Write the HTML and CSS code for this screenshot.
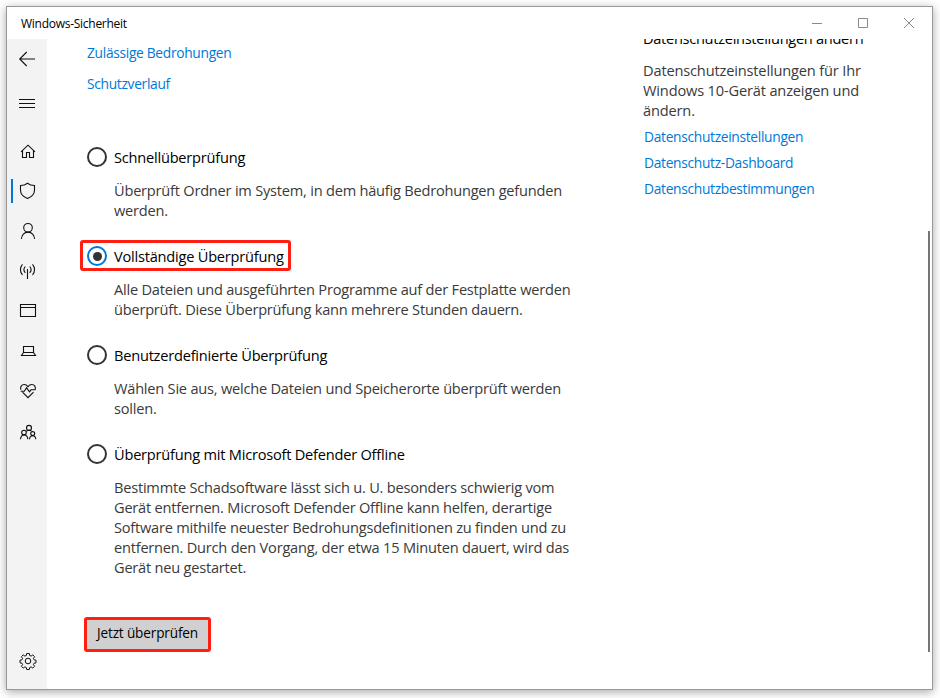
FILE: index.html
```html
<!DOCTYPE html>
<html lang="de">
<head>
    <meta charset="UTF-8">
    <title>Windows-Sicherheit</title>
    <link rel="stylesheet" href="styles.css">
</head>
<body>
<div class="window">
    <div class="titlebar">
        <div class="title">Windows-Sicherheit</div>
        <div class="controls">
            <svg class="control" viewBox="0 0 46 32"><path d="M18 16.5h10"/></svg>
            <svg class="control" viewBox="0 0 46 32"><path d="M18.5 11.5h9v9h-9z"/></svg>
            <svg class="control" viewBox="0 0 46 32"><path d="M18 11l10 10M28 11l-10 10"/></svg>
        </div>
    </div>
    <div class="main">
        <div class="sidebar">
            <svg class="icon icon-back" viewBox="0 0 40 40"><path d="M28 20H12.7M19.7 13l-7 7 7 7"/></svg>
            <svg class="icon icon-menu" viewBox="0 0 40 40"><path d="M12 15.5h16M12 19.5h16M12 23.5h16"/></svg>
            <svg class="icon" viewBox="0 0 40 40"><path d="M14 20.8l7-6.6 7 6.6M15.5 19.5v7h4v-5h3v5h4v-7"/></svg>
            <div class="active">
                <svg class="icon" viewBox="0 0 40 40"><path d="M20.5 12.2c-2 1.6-4.3 2.3-7 2.3v4.5c0 4.5 3 7 7 8.6 4-1.6 7-4.1 7-8.6v-4.5c-2.7 0-5-.7-7-2.3z"/></svg>
            </div>
            <svg class="icon" viewBox="0 0 40 40"><circle cx="21" cy="16.8" r="4.3"/><path d="M14.5 28c0-4 2.8-6.9 6.5-6.9s6.5 2.9 6.5 6.9"/></svg>
            <svg class="icon" viewBox="0 0 40 40"><path d="M20.5 18v10M18.3 15.5c-1.6 1.8-1.6 4.6 0 6.4M22.7 15.5c1.6 1.8 1.6 4.6 0 6.4M15.5 13.4c-2.7 3-2.7 7.6 0 10.6M25.5 13.4c2.7 3 2.7 7.6 0 10.6"/></svg>
            <svg class="icon" viewBox="0 0 40 40"><path d="M13.5 13.5h15v12h-15zM13.5 16.5h15"/></svg>
            <svg class="icon" viewBox="0 0 40 40"><path d="M16.5 22v-6.5h10V22M16.5 21.5h10l2 3h-14z"/></svg>
            <svg class="icon" viewBox="0 0 40 40"><path d="M13.9 18.8c-1-2.7.6-5.3 3.3-5.3 1.7 0 2.9.9 3.8 2.2.9-1.3 2.1-2.2 3.8-2.2 2.7 0 4.3 2.6 3.3 5.3h-4.1l-1.5 2-3-4-2.2 3.5h-3.6M15.5 21.2l5.5 5.5 5.5-5.5"/></svg>
            <svg class="icon" viewBox="0 0 40 40"><circle cx="22" cy="16.9" r="2.5"/><circle cx="17" cy="21.6" r="2.3"/><circle cx="25.7" cy="22.6" r="2"/><path d="M13.5 28.3c.2-2.8 1.5-4.3 3.6-4.3s3.6 1.5 3.8 4.3M19.3 20.5c.7-.8 1.6-1.2 2.7-1.2 1 0 1.9.3 2.5.9M22.5 28.3c.2-2.3 1.4-3.5 3.2-3.5s2.9 1.2 3.1 3.5"/></svg>
            <svg class="icon icon-settings" viewBox="0 0 40 40"><circle cx="21" cy="20" r="2.8"/><path d="M19.7 12.5h2.6l.4 2 1.4.6 1.7-1.2 1.8 1.8-1.2 1.7.6 1.4 2 .4v2.6l-2 .4-.6 1.4 1.2 1.7-1.8 1.8-1.7-1.2-1.4.6-.4 2h-2.6l-.4-2-1.4-.6-1.7 1.2-1.8-1.8 1.2-1.7-.6-1.4-2-.4v-2.6l2-.4.6-1.4-1.2-1.7 1.8-1.8 1.7 1.2 1.4-.6z"/></svg>
        </div>
        <div class="content">
            <div class="scan">
                <a class="link">Zulässige Bedrohungen</a>
                <a class="link">Schutzverlauf</a>
                <div class="options">
                    <div class="option">
                        <div class="option-head"><span class="radio"></span><span class="label">Schnellüberprüfung</span></div>
                        <p class="text">Überprüft Ordner im System, in dem häufig Bedrohungen gefunden<br>werden.</p>
                    </div>
                    <div class="option">
                        <div class="option-head marked"><span class="radio checked"></span><span class="label">Vollständige Überprüfung</span></div>
                        <p class="text">Alle Dateien und ausgeführten Programme auf der Festplatte werden<br>überprüft. Diese Überprüfung kann mehrere Stunden dauern.</p>
                    </div>
                    <div class="option">
                        <div class="option-head"><span class="radio"></span><span class="label">Benutzerdefinierte Überprüfung</span></div>
                        <p class="text">Wählen Sie aus, welche Dateien und Speicherorte überprüft werden<br>sollen.</p>
                    </div>
                    <div class="option">
                        <div class="option-head"><span class="radio"></span><span class="label">Überprüfung mit Microsoft Defender Offline</span></div>
                        <p class="text">Bestimmte Schadsoftware lässt sich u. U. besonders schwierig vom<br>Gerät entfernen. Microsoft Defender Offline kann helfen, derartige<br>Software mithilfe neuester Bedrohungsdefinitionen zu finden und zu<br>entfernen. Durch den Vorgang, der etwa 15 Minuten dauert, wird das<br>Gerät neu gestartet.</p>
                    </div>
                </div>
                <button class="btn">Jetzt überprüfen</button>
            </div>
            <div class="privacy">
                <div class="privacy-title">Datenschutzeinstellungen ändern</div>
                <p class="text">Datenschutzeinstellungen für Ihr<br>Windows 10-Gerät anzeigen und<br>ändern.</p>
                <div class="privacy-links">
                    <a class="link">Datenschutzeinstellungen</a>
                    <a class="link">Datenschutz-Dashboard</a>
                    <a class="link">Datenschutzbestimmungen</a>
                </div>
            </div>
            <div class="scrollbar"></div>
        </div>
    </div>
</div>
</body>
</html>
```
FILE: styles.css
```css
html{
    height: 100%;
}
body{
    height: 100%;
    margin: 0;
    padding: 6px 7px 8px 6px;
    box-sizing: border-box;
    overflow: hidden;
    background-color: #fff;
    font-family: "Open Sans", "Noto Sans", sans-serif;
    font-size: 14.6px;
    letter-spacing: -0.22px;
    line-height: 20px;
    color: #000;
}
.window{
    display: flex;
    flex-direction: column;
    box-sizing: border-box;
    height: 100%;
    border: 1px solid #999;
    background-color: #fff;
    box-shadow: 0 2px 9px rgba(0, 0, 0, 0.35);
}
.titlebar{
    display: flex;
    justify-content: space-between;
    align-items: center;
    height: 32px;
    padding-left: 14px;
}
.title{
    padding-top: 1px;
    font-size: 12px;
    letter-spacing: -0.27px;
}
.controls{
    display: flex;
}
.control{
    width: 46px;
    height: 32px;
    fill: none;
    stroke: #8a8a8a;
}
.main{
    display: flex;
    flex: 1;
    min-height: 0;
}
.sidebar{
    display: flex;
    flex-direction: column;
    width: 40px;
    background-color: #f3f3f3;
}
.icon{
    display: block;
    width: 40px;
    height: 40px;
    fill: none;
    stroke: #111;
    stroke-width: 1.1;
}
.icon-back{
    margin-bottom: 5px;
}
.icon-menu{
    margin-bottom: 7px;
    stroke-width: 1;
}
.icon-settings{
    margin-top: auto;
    margin-bottom: 8px;
    stroke-width: 1;
}
.active{
    background: linear-gradient(#0078d7, #0078d7) 4px 8px / 2px 24px no-repeat;
}
.content{
    display: flex;
    flex: 1;
    overflow: hidden;
}
.scan{
    display: flex;
    flex-direction: column;
    align-items: flex-start;
    width: 556px;
    padding: 4px 0 0 40px;
    box-sizing: border-box;
}
.link{
    display: block;
    color: #0078d7;
    font-size: 13.8px;
    letter-spacing: -0.32px;
}
.scan .link{
    margin-bottom: 11px;
}
.options{
    margin-top: 42px;
}
.option{
    margin-bottom: 26px;
}
.option-head{
    display: flex;
    align-items: center;
    position: relative;
    height: 20px;
}
/* red frame round the selected option */
.marked::after{
    content: "";
    position: absolute;
    left: -7px;
    top: -6px;
    width: 205px;
    height: 25px;
    border: 3px solid #ff1e12;
    border-radius: 3px;
}
.radio{
    display: flex;
    align-items: center;
    justify-content: center;
    box-sizing: border-box;
    width: 20px;
    height: 20px;
    margin-right: 7px;
    border: 2px solid #333;
    border-radius: 50%;
}
.checked{
    border-color: #0078d7;
}
.checked::before{
    content: "";
    width: 9px;
    height: 9px;
    border-radius: 50%;
    background-color: #333;
}
.text{
    margin: 0;
    color: #3a3a3a;
    white-space: nowrap;
}
.option .text{
    margin: 13px 0 0 27px;
}
.btn{
    width: 127px;
    height: 35px;
    margin: 14px 0 0 -3px;
    padding: 0 0 5px;
    border: 3px solid #ff1e12;
    border-radius: 3px;
    background-color: #d0d0d0;
    font-family: inherit;
    font-size: 13.6px;
    letter-spacing: -0.15px;
    white-space: nowrap;
}
.privacy{
    flex: 1;
    padding-left: 40px;
    margin-top: -11px;
}
.privacy-title{
    margin-bottom: 12px;
    letter-spacing: -0.29px;
}
.privacy .text{
    letter-spacing: -0.16px;
}
.privacy-links{
    display: flex;
    flex-direction: column;
    gap: 6px;
    padding: 7px 0 0 1px;
}
.scrollbar{
    width: 2px;
    height: 421px;
    margin: 192px 2px 0 0;
    background-color: #767676;
}
```
